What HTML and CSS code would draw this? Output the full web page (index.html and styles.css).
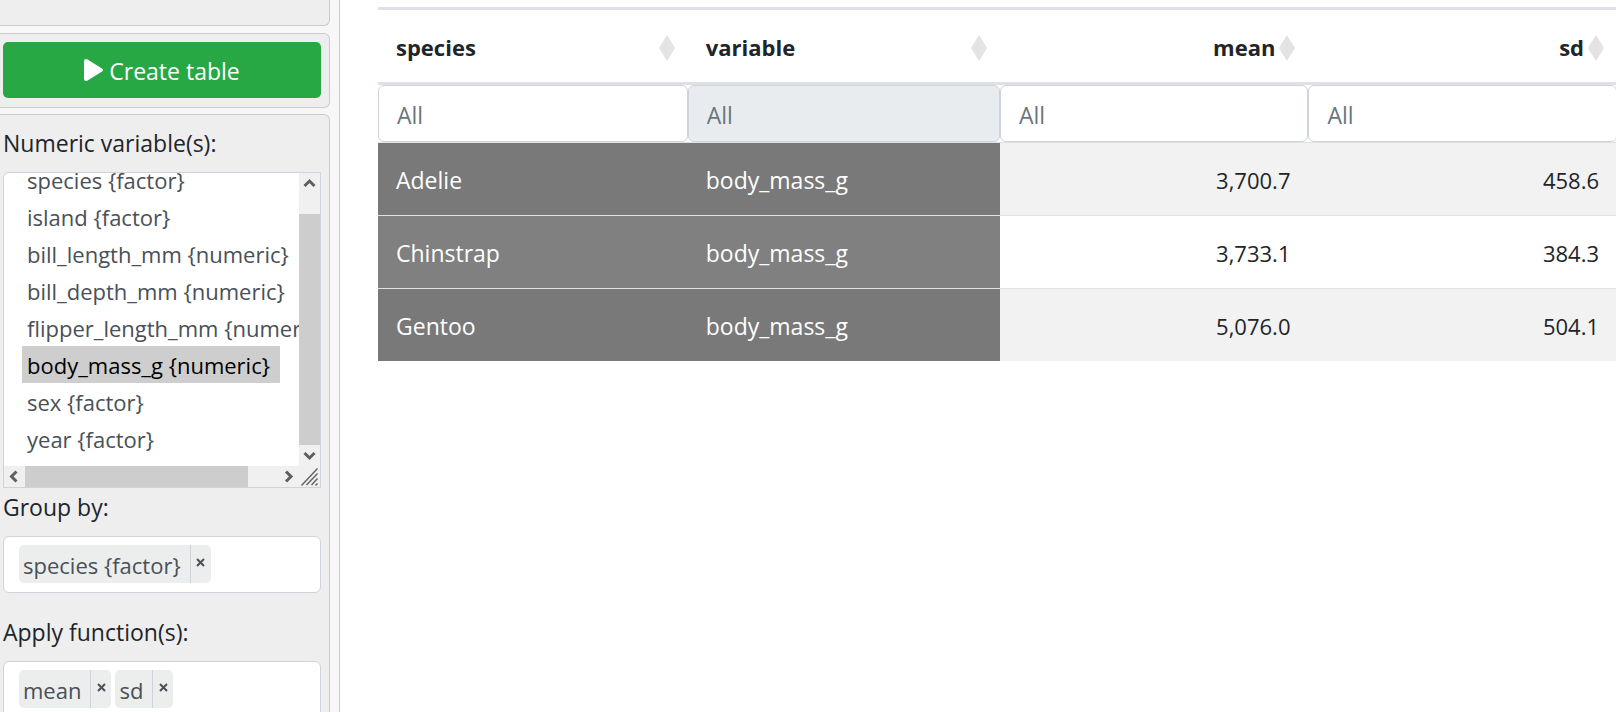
FILE: index.html
```html
<!DOCTYPE html>
<html lang="en">
<head>
<meta charset="utf-8">
<title>Create table</title>
<link rel="stylesheet" href="styles.css">
</head>
<body>
<div class="app">
  <aside class="sidebar">
    <section class="well well-end"></section>
    <section class="well well-action">
      <button type="button" class="btn-create">
        <svg class="play" viewBox="0 0 19 22" aria-hidden="true"><path d="M0 2.2Q0 0 2 0Q2.700 0 3.500.5L18 9.600Q20 11 18 12.400L3.500 21.500Q2.700 22 2 22Q0 22 0 19.800Z"/></svg>
        <span class="btn-text">Create table</span>
      </button>
    </section>
    <section class="well well-form">
      <label class="field-label" for="vars">Numeric variable(s):</label>
      <div class="listbox">
        <div class="list-view">
          <select id="vars" class="list" multiple size="8">
            <option>species {factor}</option>
            <option>island {factor}</option>
            <option>bill_length_mm {numeric}</option>
            <option>bill_depth_mm {numeric}</option>
            <option>flipper_length_mm {numeric}</option>
            <option selected>body_mass_g {numeric}</option>
            <option>sex {factor}</option>
            <option>year {factor}</option>
          </select>
        </div>
        <div class="bar bar-v">
          <svg class="arrow" viewBox="0 0 21 21"><path d="M5.500 13L10.500 8L15.500 13"/></svg>
          <div class="track"><div class="thumb"></div></div>
          <svg class="arrow" viewBox="0 0 21 21"><path d="M5.500 8L10.500 13L15.500 8"/></svg>
        </div>
        <div class="bar bar-h">
          <svg class="arrow" viewBox="0 0 21 21"><path d="M12.500 5.500L7.500 10.500L12.500 15.500"/></svg>
          <div class="track"><div class="thumb"></div></div>
          <svg class="arrow" viewBox="0 0 21 21"><path d="M8 5.500L13 10.500L8 15.500"/></svg>
        </div>
        <svg class="grip" viewBox="0 0 21 21"><path d="M2.500 19.500L18.500 2.500M7.500 19L18.500 7.500M12.500 19L18.500 12.500M16.500 19.500L18.500 17.500"/></svg>
      </div>

      <div class="field-label">Group by:</div>
      <div class="tokens">
        <span class="token"><span class="token-text">species {factor}</span><button type="button" class="remove" aria-label="Remove species"><svg viewBox="0 0 9 9"><path d="M1 1L8 8M8 1L1 8"/></svg></button></span>
      </div>

      <div class="field-label field-next">Apply function(s):</div>
      <div class="tokens">
        <span class="token"><span class="token-text">mean</span><button type="button" class="remove" aria-label="Remove mean"><svg viewBox="0 0 9 9"><path d="M1 1L8 8M8 1L1 8"/></svg></button></span>
        <span class="token"><span class="token-text">sd</span><button type="button" class="remove" aria-label="Remove sd"><svg viewBox="0 0 9 9"><path d="M1 1L8 8M8 1L1 8"/></svg></button></span>
      </div>
    </section>
  </aside>

  <main class="main">
    <table class="data">
      <colgroup><col class="c1"><col class="c2"><col class="c3"><col></colgroup>
      <thead>
        <tr>
          <th scope="col"><div class="head"><span>species</span><svg class="sort" viewBox="0 0 16 26"><path d="M8 0L16 13L8 26L0 13Z"/></svg></div></th>
          <th scope="col"><div class="head"><span>variable</span><svg class="sort" viewBox="0 0 16 26"><path d="M8 0L16 13L8 26L0 13Z"/></svg></div></th>
          <th scope="col"><div class="head num"><span>mean</span><svg class="sort" viewBox="0 0 16 26"><path d="M8 0L16 13L8 26L0 13Z"/></svg></div></th>
          <th scope="col"><div class="head num"><span>sd</span><svg class="sort" viewBox="0 0 16 26"><path d="M8 0L16 13L8 26L0 13Z"/></svg></div></th>
        </tr>
        <tr class="filters">
          <td><input type="text" placeholder="All" aria-label="Filter species"></td>
          <td><input type="text" placeholder="All" aria-label="Filter variable" disabled></td>
          <td><input type="text" placeholder="All" aria-label="Filter mean"></td>
          <td><input type="text" placeholder="All" aria-label="Filter sd"></td>
        </tr>
      </thead>
      <tbody>
        <tr><td class="key">Adelie</td><td class="key">body_mass_g</td><td class="val">3,700.7</td><td class="val">458.6</td></tr>
        <tr><td class="key">Chinstrap</td><td class="key">body_mass_g</td><td class="val">3,733.1</td><td class="val">384.3</td></tr>
        <tr><td class="key">Gentoo</td><td class="key">body_mass_g</td><td class="val">5,076.0</td><td class="val">504.1</td></tr>
      </tbody>
    </table>
  </main>
</div>
</body>
</html>
```
FILE: styles.css
```css
* { box-sizing: border-box; }
html, body { height: 100%; }
body {
  margin: 0;
  overflow: hidden;
  background: #fff;
  color: #212529;
  font: 23px/36px "Open Sans", "Noto Sans", sans-serif;
}
button, input, select { font: inherit; color: inherit; margin: 0; }
svg { display: block; flex: none; }

.app { display: flex; min-height: 100%; }
.sidebar {
  flex: none;
  width: 340px;
  height: 100vh;
  overflow: hidden;
  padding-right: 9px;
  background: #f7f7f7;
  border-right: 1px solid #ccc;
}
.well {
  background: #eee;
  border: 1px solid #ccc;
  border-left: 0;
  border-radius: 0 6px 6px 0;
  padding: 8px 8px 9px 3px;
}
.well + .well { margin-top: 7px; }
.well-end { height: 26px; border-top: 0; border-top-right-radius: 0; }
.well-form.well { margin-top: 6px; padding-top: 10px; }

.btn-create {
  display: flex;
  align-items: center;
  justify-content: center;
  gap: 6px;
  width: 100%;
  height: 56px;
  padding: 0;
  border: 0;
  border-radius: 5px;
  background: #28a745;
  color: #fff;
}
.btn-text { padding-top: 2px; }
.play { width: 19px; height: 22px; fill: #fff; }

.field-label { display: block; height: 47px; }
.field-next { margin-top: 21px; }

.listbox {
  display: grid;
  grid-template-columns: 1fr 21px;
  grid-template-rows: 293px 21px;
  border: 1px solid #ced4da;
  border-radius: 6px 0 0 0;
  background: #fff;
  overflow: hidden;
}
.listbox + .field-label { margin-top: 1px; }
.list-view { display: flex; align-items: flex-end; overflow: hidden; min-width: 0; }
.list {
  flex: none;
  width: 340px;
  height: 314px;
  padding: 9px 18px;
  border: 0;
  outline: 0;
  background: transparent;
  color: #495057;
  font-size: 22px;
  overflow: hidden;
}
.list option { width: max-content; height: 37px; min-height: 37px; padding: 4px 10px 0 5px; }
.list option:checked { background: #cecece; color: #000; }

.bar { display: flex; background: #f0f0f0; }
.bar-v { flex-direction: column; }
.track { flex: 1; display: flex; }
.thumb { background: #cdcdcd; }
.bar-v .track { align-items: flex-end; }
.bar-v .thumb { width: 100%; height: 92%; }
.bar-h .thumb { width: 88%; }
.arrow { width: 21px; height: 21px; fill: none; stroke: #606060; stroke-width: 3; }
.grip { width: 21px; height: 21px; background: #f0f0f0; fill: none; stroke: #666; stroke-width: 1.5; }

.tokens {
  display: flex;
  gap: 4px;
  height: 57px;
  padding: 8px 15px;
  border: 1px solid #ced4da;
  border-radius: 6px;
  background: #fff;
}
.token {
  display: flex;
  height: 38px;
  border-radius: 5px;
  background: #eceeee;
  color: #495057;
  font-size: 22px;
}
.token-text { padding: 2px 9px 0 4px; }
.remove {
  width: 21px;
  padding: 0 0 4px;
  border: 0;
  border-left: 1px solid #ced4da;
  background: transparent;
}
.remove svg { width: 9px; height: 9px; margin: 0 auto; fill: none; stroke: #495057; stroke-width: 2; }

.main { flex: 1; min-width: 0; padding: 7px 0 0 38px; overflow: hidden; }
.data { width: calc(100% + 1px); table-layout: fixed; border-collapse: separate; border-spacing: 0; }
.c1 { width: 25%; }
.c2 { width: 25.2%; }
.c3 { width: 24.9%; }
.data th {
  padding: 0;
  border-top: 3px solid #dee2e6;
  border-bottom: 3px solid #dee2e6;
  font-weight: 700;
  font-size: 22px;
}
.head {
  display: flex;
  align-items: center;
  justify-content: space-between;
  height: 72px;
  padding: 4px 13px 0 18px;
}
.head span { padding-bottom: 2px; }
.head.num { justify-content: flex-end; gap: 4px; }
.sort { width: 16px; height: 26px; fill: #e3e3e3; }
.filters td { padding: 0; }
.filters input {
  display: block;
  width: 100%;
  height: 57px;
  padding: 2px 18px 0;
  border: 1px solid #ced4da;
  border-radius: 6px;
  background: #fff;
}
.filters input:disabled { background: #e9ecef; }
.filters input::placeholder { color: #6c757d; opacity: 1; }
.data tbody td { height: 73px; padding: 1px 18px 0; border-top: 1px solid #dee2e6; }
.data tbody tr:nth-child(odd) { background: #f2f2f2; }
.data tbody .key { background: gray; color: #fff; }
.data tbody tr:nth-child(odd) .key { background: #797979; }
.data tbody .val { text-align: right; font-size: 22px; }
```
